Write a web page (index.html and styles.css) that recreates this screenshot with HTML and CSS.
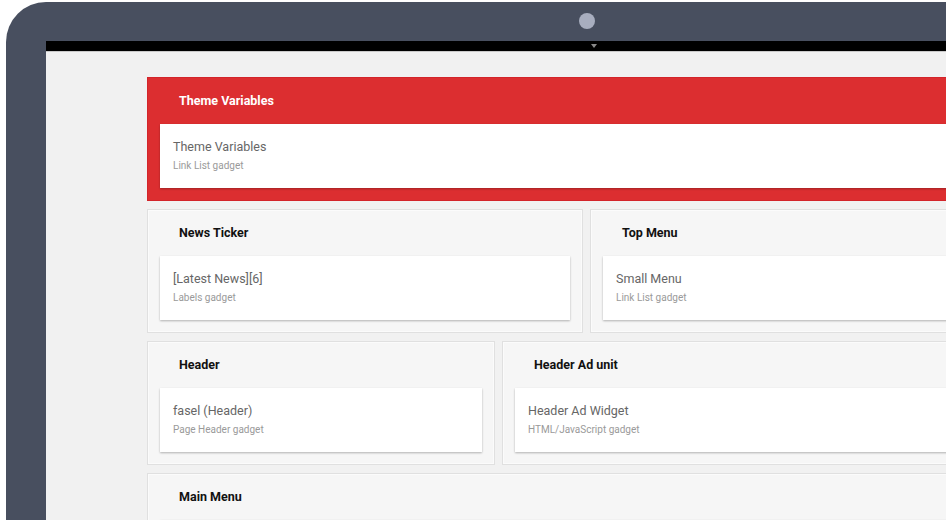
FILE: index.html
```html
<!DOCTYPE html>
<html lang="en">
<head>
  <meta charset="UTF-8">
  <title>Layout Preview</title>
  <link rel="stylesheet" href="styles.css">
</head>
<body>
  <!-- Laptop frame -->
  <div class="device">
    <span class="camera"></span>
    <div class="screen">
      <div class="topbar"><span class="caret"></span></div>

      <div class="layout">
        <div class="section section-red">
          <div class="section-title">Theme Variables</div>
          <div class="widget">
            <div class="widget-name">Theme Variables</div>
            <div class="widget-type">Link List gadget</div>
          </div>
        </div>

        <div class="row row-a">
          <div class="section">
            <div class="section-title">News Ticker</div>
            <div class="widget">
              <div class="widget-name">[Latest News][6]</div>
              <div class="widget-type">Labels gadget</div>
            </div>
          </div>
          <div class="section">
            <div class="section-title">Top Menu</div>
            <div class="widget">
              <div class="widget-name">Small Menu</div>
              <div class="widget-type">Link List gadget</div>
            </div>
          </div>
        </div>

        <div class="row row-b">
          <div class="section">
            <div class="section-title">Header</div>
            <div class="widget">
              <div class="widget-name">fasel (Header)</div>
              <div class="widget-type">Page Header gadget</div>
            </div>
          </div>
          <div class="section">
            <div class="section-title">Header Ad unit</div>
            <div class="widget">
              <div class="widget-name">Header Ad Widget</div>
              <div class="widget-type">HTML/JavaScript gadget</div>
            </div>
          </div>
        </div>

        <div class="section">
          <div class="section-title">Main Menu</div>
          <div class="widget"></div>
        </div>
      </div>
    </div>
  </div>
</body>
</html>
```

FILE: styles.css
```css
body {
  margin: 0;
  background: #fff;
  font-family: Roboto, 'Liberation Sans', Arial, sans-serif;
  overflow: hidden;
  height: 520px;
}

/* Device frame */
.device {
  position: relative;
  margin: 2px 0 0 6px;
  width: 1100px;
  height: 640px;
  background: #484f5f;
  border-radius: 40px 40px 0 0;
  padding: 39px 0 0 40px;
  box-sizing: border-box;
}
.camera {
  position: absolute;
  left: 573px;
  top: 11px;
  width: 16px;
  height: 16px;
  border-radius: 50%;
  background: #a8aebf;
}
.screen {
  background: #f1f1f1;
  height: 100%;
}
.topbar {
  position: relative;
  height: 10px;
  background: #000;
  border-bottom: 1px solid #c9c9c9;
}
.caret {
  position: absolute;
  left: 545px;
  top: 3px;
  border-left: 3px solid transparent;
  border-right: 3px solid transparent;
  border-top: 4px solid #8a8a8a;
}

/* Layout sections */
.layout {
  display: flex;
  flex-direction: column;
  gap: 8px;
  width: 900px;
  padding: 25px 0 0 101px;
}
.row {
  display: grid;
  gap: 7px;
}
.row-a {
  grid-template-columns: 436px 1fr;
}
.row-b {
  grid-template-columns: 348px 1fr;
}
.section {
  background: #f6f6f6;
  border: 1px solid #e0e0e0;
  box-shadow: inset 0 0 0 1px #fbfbfb;
  padding: 0 12px 12px 12px;
}
.section-title {
  font-size: 12.5px;
  font-weight: bold;
  color: #111;
  height: 46px;
  line-height: 46px;
  padding-left: 19px;
}
.section-red {
  background: #dc2e30;
  border-color: #d3242a;
  box-shadow: none;
}
.section-red .section-title {
  color: #fff;
}
.widget {
  background: #fff;
  padding: 14px 13px 0;
  height: 64px;
  box-sizing: border-box;
  box-shadow: 0 1px 2px rgba(0, 0, 0, 0.28);
}
.widget-name {
  font-size: 12.5px;
  color: #666;
  line-height: 17px;
}
.widget-type {
  font-size: 10px;
  color: #9a9a9a;
  margin-top: 5px;
}
```
